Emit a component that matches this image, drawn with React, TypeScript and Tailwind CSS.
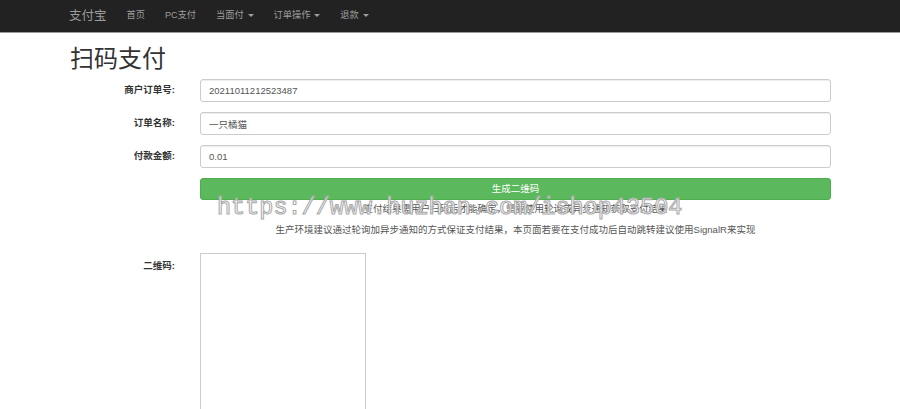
import React from 'react';

const font = 'font-["Liberation_Sans","Noto_Sans_CJK_SC",sans-serif]';

const Caret = () => (
  <span className="ml-[4px] inline-block h-0 w-0 border-x-[3px] border-t-[3px] border-x-transparent border-t-[#9d9d9d] align-middle" />
);

const navItems = [
  { label: '首页', caret: false },
  { label: 'PC支付', caret: false },
  { label: '当面付', caret: true },
  { label: '订单操作', caret: true },
  { label: '退款', caret: true },
];

const fields = [
  { label: '商户订单号:', value: '20211011212523487' },
  { label: '订单名称:', value: '一只橘猫' },
  { label: '付款金额:', value: '0.01' },
];

const App = () => {
  return (
    <div className={`relative h-[409px] w-[900px] overflow-hidden bg-white ${font} text-[#333]`}>
      {/* Navbar */}
      <nav className="flex h-[33px] items-center border-b border-[#9a9a9a] bg-[#222] pl-[69px]">
        <span className="mr-[20px] text-[12.5px] text-[#9d9d9d]">支付宝</span>
        <ul className="flex items-center gap-[20px] text-[9.2px] text-[#9d9d9d]">
          {navItems.map((item) => (
            <li key={item.label} className="flex items-center">
              {item.label}
              {item.caret && <Caret />}
            </li>
          ))}
        </ul>
      </nav>

      <main className="w-[831px] pl-[70px]">
        <h1 className="mt-[13px] mb-[7px] text-[24px] leading-[26px] font-normal text-[#333]">扫码支付</h1>

        {/* Form */}
        <div className="flex flex-col gap-[10px]">
          {fields.map((f) => (
            <div key={f.label} className="flex items-center">
              <label className="w-[105px] text-right text-[9.5px] font-bold">{f.label}</label>
              <input
                readOnly
                value={f.value}
                className="ml-[25px] h-[23px] flex-1 rounded-[3px] border border-[#ccc] px-[8px] text-[9.5px] text-[#555] shadow-[inset_0_1px_1px_rgba(0,0,0,0.075)] outline-none"
              />
            </div>
          ))}
          <div className="flex">
            <div className="w-[130px]" />
            <button className="h-[22px] flex-1 rounded-[3px] border border-[#4cae4c] bg-[#5cb85c] text-[9.5px] text-white">
              生成二维码
            </button>
          </div>
        </div>

        {/* Notes */}
        <div className="ml-[130px] mt-[2px] text-center text-[9.5px] leading-[13px] text-[#555]">
          <p className="mb-[8px]">支付结果需用户扫码后才能确定，需要使用轮询或异步通知获取支付结果</p>
          <p>生产环境建议通过轮询加异步通知的方式保证支付结果，本页面若要在支付成功后自动跳转建议使用SignalR来实现</p>
        </div>

        {/* QR code */}
        <div className="mt-[17px] flex items-start">
          <label className="w-[105px] pt-[6px] text-right text-[9.5px] font-bold">二维码:</label>
          <div className="ml-[25px] h-[170px] w-[166px] border border-[#ccc] bg-white" />
        </div>
      </main>

      {/* Watermark overlay */}
      <div className='pointer-events-none absolute left-[217px] top-[196px] font-["Liberation_Mono",monospace] text-[23.5px] leading-none text-white/70 [-webkit-text-stroke:1px_#a8a8a8]'>
        https://www.huzhan.com/ishop43504
      </div>
    </div>
  );
};

export default App;
